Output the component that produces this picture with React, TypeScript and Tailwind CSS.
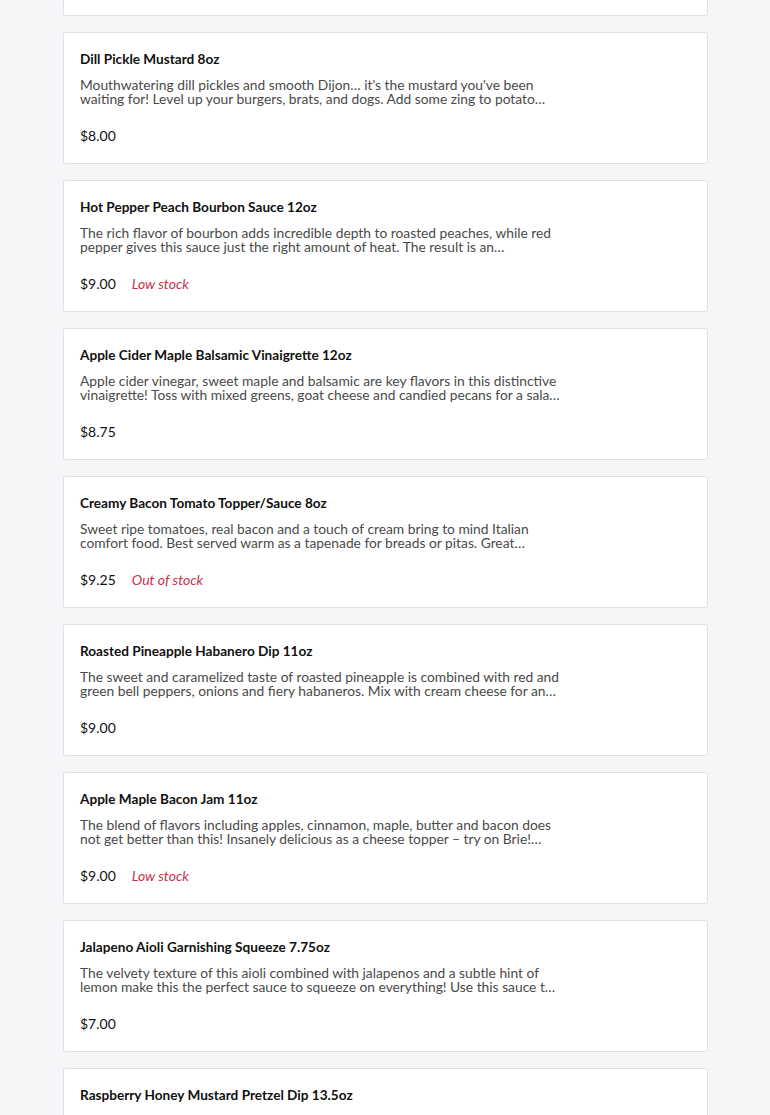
import React from "react";

type Item = { title: string; desc: string; price: string; status?: string };

const items: Item[] = [
  { title: "Habanero Mango Salsa 16oz", desc: "Sweet mango meets fiery habanero in this bold salsa. Perfect with chips, tacos, grilled fish or chicken.", price: "$8.50" },
  { title: "Dill Pickle Mustard 8oz", desc: "Mouthwatering dill pickles and smooth Dijon… it's the mustard you've been waiting for! Level up your burgers, brats, and dogs. Add some zing to potato salad and deviled eggs.", price: "$8.00" },
  { title: "Hot Pepper Peach Bourbon Sauce 12oz", desc: "The rich flavor of bourbon adds incredible depth to roasted peaches, while red pepper gives this sauce just the right amount of heat. The result is an unforgettable glaze.", price: "$9.00", status: "Low stock" },
  { title: "Apple Cider Maple Balsamic Vinaigrette 12oz", desc: "Apple cider vinegar, sweet maple and balsamic are key flavors in this distinctive vinaigrette! Toss with mixed greens, goat cheese and candied pecans for a salad to remember.", price: "$8.75" },
  { title: "Creamy Bacon Tomato Topper/Sauce 8oz", desc: "Sweet ripe tomatoes, real bacon and a touch of cream bring to mind Italian comfort food. Best served warm as a tapenade for breads or pitas. Great topping for pasta.", price: "$9.25", status: "Out of stock" },
  { title: "Roasted Pineapple Habanero Dip 11oz", desc: "The sweet and caramelized taste of roasted pineapple is combined with red and green bell peppers, onions and fiery habaneros. Mix with cream cheese for an easy dip.", price: "$9.00" },
  { title: "Apple Maple Bacon Jam 11oz", desc: "The blend of flavors including apples, cinnamon, maple, butter and bacon does not get better than this! Insanely delicious as a cheese topper – try on Brie! Amazing on burgers.", price: "$9.00", status: "Low stock" },
  { title: "Jalapeno Aioli Garnishing Squeeze 7.75oz", desc: "The velvety texture of this aioli combined with jalapenos and a subtle hint of lemon make this the perfect sauce to squeeze on everything! Use this sauce to top tacos.", price: "$7.00" },
  { title: "Raspberry Honey Mustard Pretzel Dip 13.5oz", desc: "Sweet raspberries and honey blend with tangy mustard for the ultimate pretzel dip. Also great as a glaze.", price: "$8.50" },
];

export default function App() {
  return (
    <div
      className="h-[1115px] overflow-hidden bg-[#f5f6f8] pl-[63px] pr-[62px]"
      style={{ fontFamily: '"Lato", "Open Sans", sans-serif' }}
    >
      <div className="flex flex-col gap-4 -mt-[116px]">
        {items.map((it, i) => (
          <div key={i} className="bg-white border border-[#dfe1e5] rounded-[2px] h-[132px] p-4 flex flex-col">
            <div className="text-[13.6px] leading-5 font-bold text-[#111]">{it.title}</div>
            <div className="mt-[9px] w-[482px] text-[13.8px] leading-[14px] text-[#4a4a4a] line-clamp-2">{it.desc}</div>
            <div className="mt-5 flex items-center gap-4 text-[14px] leading-5">
              <span className="text-[#111]">{it.price}</span>
              {it.status && <span className="italic text-[#c8324a]">{it.status}</span>}
            </div>
          </div>
        ))}
      </div>
    </div>
  );
}
